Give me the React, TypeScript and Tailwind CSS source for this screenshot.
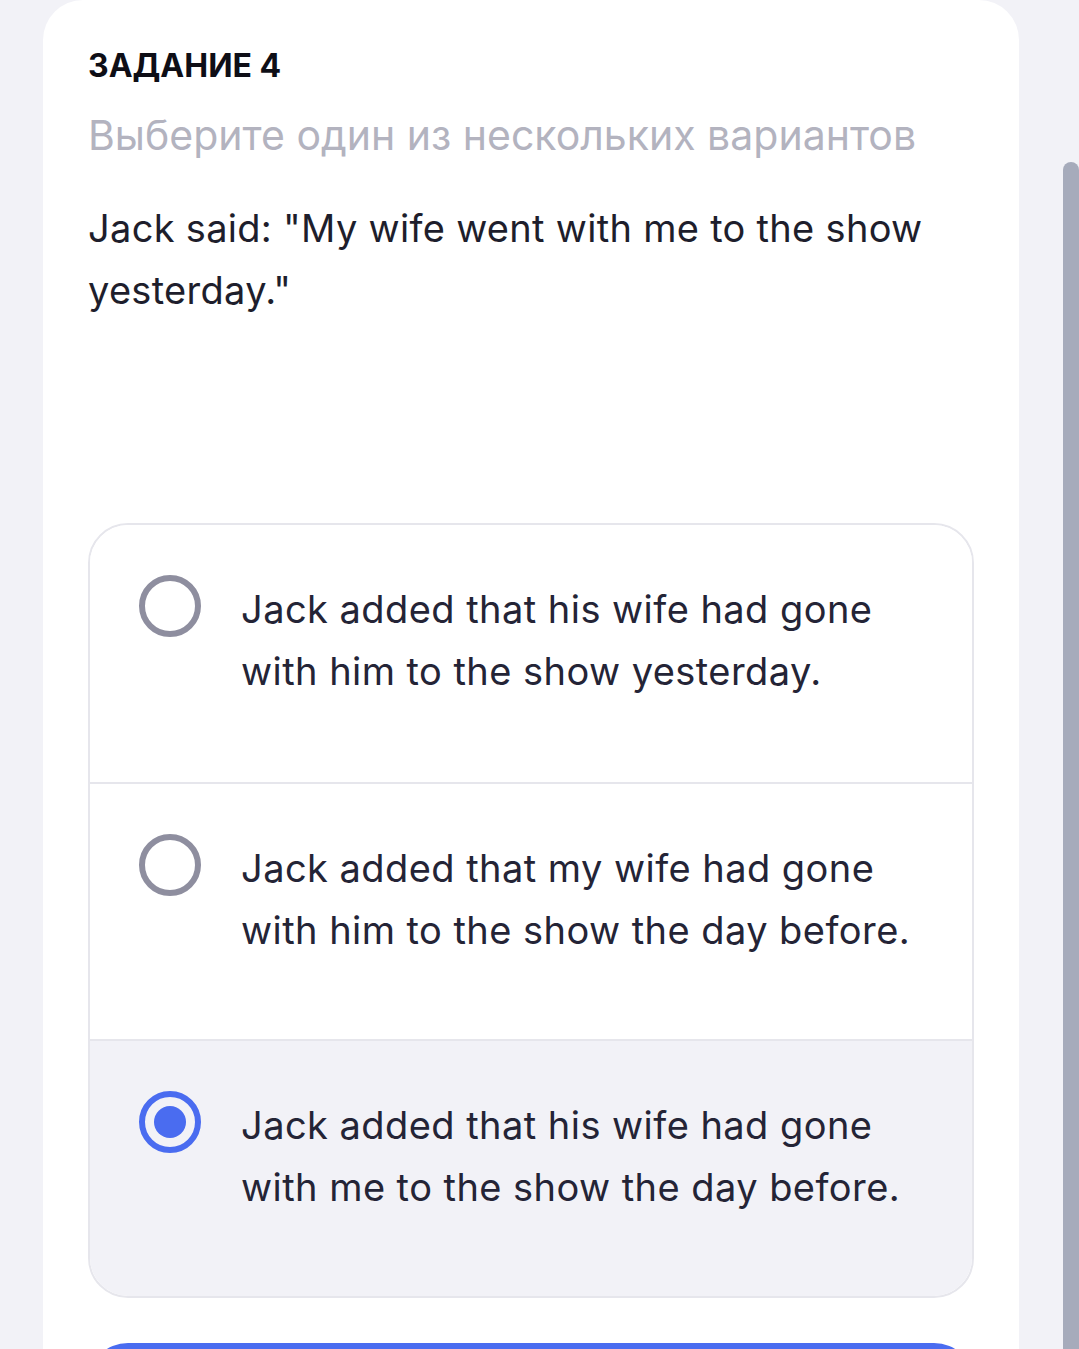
import React from "react";

const options = [
  { text: "Jack added that his wife had gone with him to the show yesterday.", checked: false },
  { text: "Jack added that my wife had gone with him to the show the day before.", checked: false },
  { text: "Jack added that his wife had gone with me to the show the day before.", checked: true },
];

function Radio({ checked }: { checked: boolean }) {
  if (checked) {
    return (
      <div className="w-[62px] h-[62px] shrink-0 rounded-full border-[6px] border-[#4a6cf0] flex items-center justify-center">
        <div className="w-[32px] h-[32px] rounded-full bg-[#4a6cf0]" />
      </div>
    );
  }
  return <div className="w-[62px] h-[62px] shrink-0 rounded-full border-[6px] border-[#8e8e9f]" />;
}

export default function App() {
  return (
    <div className="w-[1079px] h-[1349px] overflow-hidden bg-[#f2f2f7] flex" style={{ fontFamily: "Inter, 'Noto Sans', sans-serif" }}>
      <div className="ml-[43px] w-[976px] shrink-0 bg-white rounded-t-[40px] px-[45px] pt-[44px]">
        <div className="text-[32px] font-bold text-[#0e0e16] leading-[44px]">ЗАДАНИЕ 4</div>
        <div className="mt-[21px] text-[41px] text-[#b3b3bf] leading-[52px]">Выберите один из нескольких вариантов</div>
        <div className="mt-[36px] text-[38px] tracking-[0.3px] text-[#1e1e2c] leading-[62px] pr-[30px]">
          Jack said: "My wife went with me to the show yesterday."
        </div>
        <div className="mt-[202px] w-[886px] rounded-[40px] border-2 border-[#e6e6ec] overflow-hidden">
          {options.map((o, i) => (
            <div
              key={i}
              className={`h-[257px] flex items-start pl-[49px] pt-[50px] pr-[40px] ${i > 0 ? "border-t-2 border-[#e6e6ec]" : ""} ${o.checked ? "bg-[#f2f2f7]" : "bg-white"}`}
            >
              <Radio checked={o.checked} />
              <div className="ml-[40px] mt-[3px] text-[38px] tracking-[0.45px] text-[#242436] leading-[62px]">{o.text}</div>
            </div>
          ))}
        </div>
        <div className="mt-[45px] w-[886px] h-[100px] rounded-[40px] bg-[#4a6cf0]" />
      </div>
      <div className="ml-[44px] mt-[162px] w-[16px] h-[1300px] shrink-0 rounded-t-full bg-[#a6abbb]" />
    </div>
  );
}
